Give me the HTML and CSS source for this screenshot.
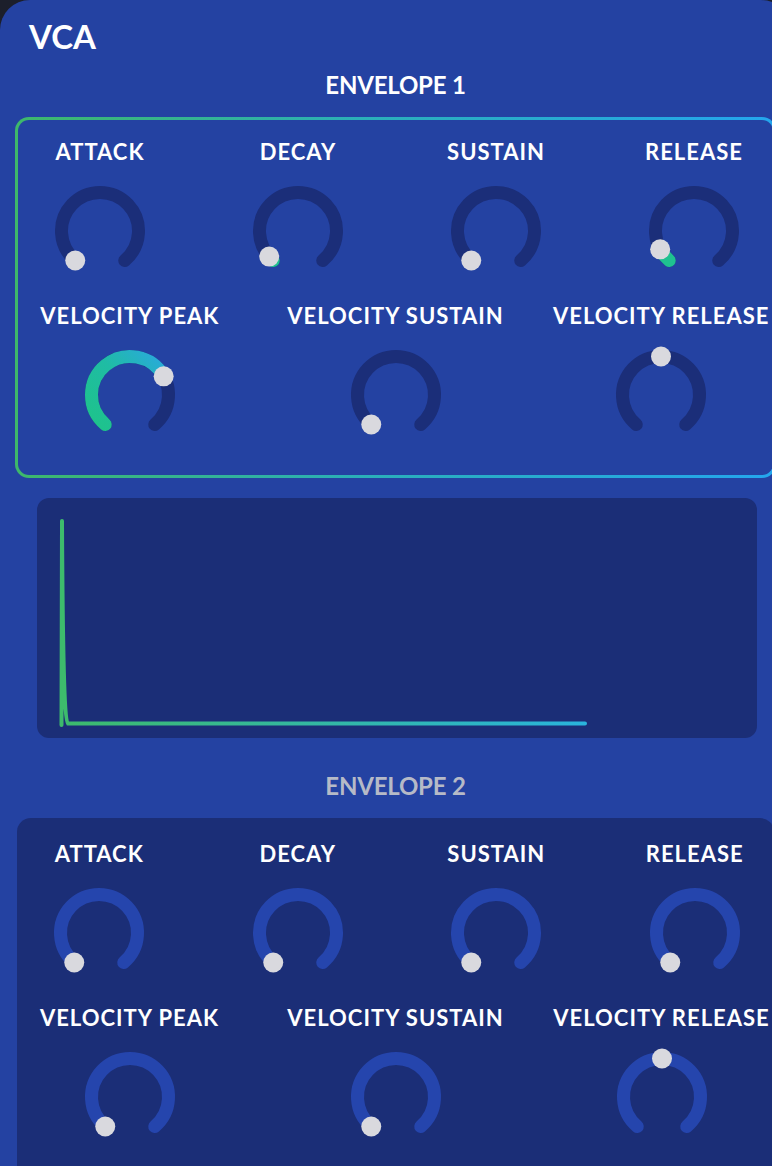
FILE: index.html
```html
<!DOCTYPE html>
<html>
<head>
<meta charset="utf-8">
<title>VCA</title>
<link rel="stylesheet" href="styles.css">
</head>
<body>
<div class="panel">
  <h1 class="title">VCA</h1>

  <h2 class="env-title">ENVELOPE 1</h2>
  <section class="env env-active">
    <div class="row row-4">
      <div class="knob">
        <div class="label">ATTACK</div>
        <svg class="dial" viewBox="0 0 100 100" width="100" height="100">
          <path class="track" d="M25.25 79.49 A38.5 38.5 0 1 1 74.75 79.49"/>
          <circle class="dot" cx="25.25" cy="79.49" r="10"/>
        </svg>
      </div>
      <div class="knob">
        <div class="label">DECAY</div>
        <svg class="dial" viewBox="0 0 100 100" width="100" height="100">
          <path class="track" d="M25.25 79.49 A38.5 38.5 0 1 1 74.75 79.49"/>
          <path class="value" d="M25.25 79.49 A38.5 38.5 0 0 1 21.21 75.56"/>
          <circle class="dot" cx="21.21" cy="75.56" r="10"/>
        </svg>
      </div>
      <div class="knob">
        <div class="label">SUSTAIN</div>
        <svg class="dial" viewBox="0 0 100 100" width="100" height="100">
          <path class="track" d="M25.25 79.49 A38.5 38.5 0 1 1 74.75 79.49"/>
          <circle class="dot" cx="25.25" cy="79.49" r="10"/>
        </svg>
      </div>
      <div class="knob">
        <div class="label">RELEASE</div>
        <svg class="dial" viewBox="0 0 100 100" width="100" height="100">
          <path class="track" d="M25.25 79.49 A38.5 38.5 0 1 1 74.75 79.49"/>
          <path class="value" d="M25.25 79.49 A38.5 38.5 0 0 1 16.17 68.37"/>
          <circle class="dot" cx="16.17" cy="68.37" r="10"/>
        </svg>
      </div>
    </div>
    <div class="row row-3">
      <div class="knob">
        <div class="label">VELOCITY PEAK</div>
        <svg class="dial" viewBox="0 0 100 100" width="100" height="100">
          <defs>
            <linearGradient id="vpGrad" x1="0" y1="1" x2="1" y2="0">
              <stop offset="0" stop-color="#1ec38b"/>
              <stop offset="0.55" stop-color="#1fbca4"/>
              <stop offset="1" stop-color="#2aa9de"/>
            </linearGradient>
          </defs>
          <path class="track" d="M25.25 79.49 A38.5 38.5 0 1 1 74.75 79.49"/>
          <path class="value-grad" stroke="url(#vpGrad)" d="M25.25 79.49 A38.5 38.5 0 1 1 83.67 31.33"/>
          <circle class="dot" cx="83.67" cy="31.33" r="10"/>
        </svg>
      </div>
      <div class="knob">
        <div class="label">VELOCITY SUSTAIN</div>
        <svg class="dial" viewBox="0 0 100 100" width="100" height="100">
          <path class="track" d="M25.25 79.49 A38.5 38.5 0 1 1 74.75 79.49"/>
          <circle class="dot" cx="25.25" cy="79.49" r="10"/>
        </svg>
      </div>
      <div class="knob">
        <div class="label">VELOCITY RELEASE</div>
        <svg class="dial" viewBox="0 0 100 100" width="100" height="100">
          <path class="track" d="M25.25 79.49 A38.5 38.5 0 1 1 74.75 79.49"/>
          <circle class="dot" cx="50" cy="11.5" r="10"/>
        </svg>
      </div>
    </div>
  </section>

  <div class="graph">
    <svg viewBox="0 0 720 240" width="720" height="240">
      <defs>
        <linearGradient id="envGrad" gradientUnits="userSpaceOnUse" x1="25" y1="0" x2="548" y2="0">
          <stop offset="0" stop-color="#3dbb6c"/>
          <stop offset="1" stop-color="#2ab4dc"/>
        </linearGradient>
      </defs>
      <path class="env-line" stroke="url(#envGrad)" d="M24.5 227 L25 23 C25.6 140 26.5 222 31 225.6 L548 225.6"/>
    </svg>
  </div>

  <h2 class="env-title env-title-dim">ENVELOPE 2</h2>
  <section class="env env-inactive">
    <div class="row row-4">
      <div class="knob">
        <div class="label">ATTACK</div>
        <svg class="dial" viewBox="0 0 100 100" width="100" height="100">
          <path class="track" d="M25.25 79.49 A38.5 38.5 0 1 1 74.75 79.49"/>
          <circle class="dot" cx="25.25" cy="79.49" r="10"/>
        </svg>
      </div>
      <div class="knob">
        <div class="label">DECAY</div>
        <svg class="dial" viewBox="0 0 100 100" width="100" height="100">
          <path class="track" d="M25.25 79.49 A38.5 38.5 0 1 1 74.75 79.49"/>
          <circle class="dot" cx="25.25" cy="79.49" r="10"/>
        </svg>
      </div>
      <div class="knob">
        <div class="label">SUSTAIN</div>
        <svg class="dial" viewBox="0 0 100 100" width="100" height="100">
          <path class="track" d="M25.25 79.49 A38.5 38.5 0 1 1 74.75 79.49"/>
          <circle class="dot" cx="25.25" cy="79.49" r="10"/>
        </svg>
      </div>
      <div class="knob">
        <div class="label">RELEASE</div>
        <svg class="dial" viewBox="0 0 100 100" width="100" height="100">
          <path class="track" d="M25.25 79.49 A38.5 38.5 0 1 1 74.75 79.49"/>
          <circle class="dot" cx="25.25" cy="79.49" r="10"/>
        </svg>
      </div>
    </div>
    <div class="row row-3">
      <div class="knob">
        <div class="label">VELOCITY PEAK</div>
        <svg class="dial" viewBox="0 0 100 100" width="100" height="100">
          <path class="track" d="M25.25 79.49 A38.5 38.5 0 1 1 74.75 79.49"/>
          <circle class="dot" cx="25.25" cy="79.49" r="10"/>
        </svg>
      </div>
      <div class="knob">
        <div class="label">VELOCITY SUSTAIN</div>
        <svg class="dial" viewBox="0 0 100 100" width="100" height="100">
          <path class="track" d="M25.25 79.49 A38.5 38.5 0 1 1 74.75 79.49"/>
          <circle class="dot" cx="25.25" cy="79.49" r="10"/>
        </svg>
      </div>
      <div class="knob">
        <div class="label">VELOCITY RELEASE</div>
        <svg class="dial" viewBox="0 0 100 100" width="100" height="100">
          <path class="track" d="M25.25 79.49 A38.5 38.5 0 1 1 74.75 79.49"/>
          <circle class="dot" cx="50" cy="11.5" r="10"/>
        </svg>
      </div>
    </div>
  </section>
</div>
</body>
</html>
```

FILE: styles.css
```css
html, body {
  margin: 0;
  padding: 0;
  background: #1c1f2b;
  overflow: hidden;
  height: 1166px;
}

body {
  font-family: "Lato", "Noto Sans", sans-serif;
  font-weight: 700;
  color: #ffffff;
}

.panel {
  width: 791px;
  min-height: 1200px;
  box-sizing: border-box;
  background: #2442a2;
  border-radius: 30px;
  padding-top: 19px;
}

.title {
  margin: 0 0 0 29px;
  font-size: 33px;
  line-height: 35px;
  font-weight: 700;
  letter-spacing: 0;
}

.env-title {
  margin: 18px 0 0 0;
  font-size: 24px;
  line-height: 25px;
  font-weight: 700;
  text-align: center;
  letter-spacing: -0.2px;
}

.env-title-dim {
  margin-top: 35px;
  color: #b6bac7;
}

.env {
  margin-top: 20px;
  border-radius: 14px;
}

.env-active {
  margin-left: 15px;
  margin-right: 15px;
  border: 3px solid transparent;
  padding: 21px 0 30px 0;
  background:
    linear-gradient(#2442a2, #2442a2) padding-box,
    linear-gradient(90deg, #3eb86a 0%, #2bb0b8 45%, #24a6ee 100%) border-box;
}

.env-inactive {
  margin-left: 17px;
  margin-right: 17px;
  padding: 25px 0 40px 0;
  background: #1b2e77;
}

.row {
  display: flex;
  justify-content: center;
}

.row-4 {
  gap: 40px;
  padding-left: 3px;
}

.row-4 .knob {
  width: 160px;
}

.row-3 {
  gap: 42px;
  margin-top: 24px;
}

.row-3 .knob {
  width: 224px;
}

.knob {
  display: flex;
  flex-direction: column;
  align-items: center;
}

.label {
  font-size: 22px;
  line-height: 22px;
  letter-spacing: 1px;
  white-space: nowrap;
  text-align: center;
}

.dial {
  display: block;
  margin-top: 18px;
  overflow: visible;
}

.track {
  fill: none;
  stroke: #1b2e79;
  stroke-width: 13;
  stroke-linecap: round;
}

.env-inactive .track {
  stroke: #2545ad;
}

.value {
  fill: none;
  stroke: #1fc190;
  stroke-width: 13;
  stroke-linecap: round;
}

.value-grad {
  fill: none;
  stroke-width: 13;
  stroke-linecap: round;
}

.dot {
  fill: #d9d9de;
}

.graph {
  width: 720px;
  height: 240px;
  margin: 20px 0 0 37px;
  background: #1b2e77;
  border-radius: 12px;
  overflow: hidden;
}

.graph svg {
  display: block;
}

.env-line {
  fill: none;
  stroke-width: 4;
  stroke-linecap: round;
  stroke-linejoin: round;
}
```
